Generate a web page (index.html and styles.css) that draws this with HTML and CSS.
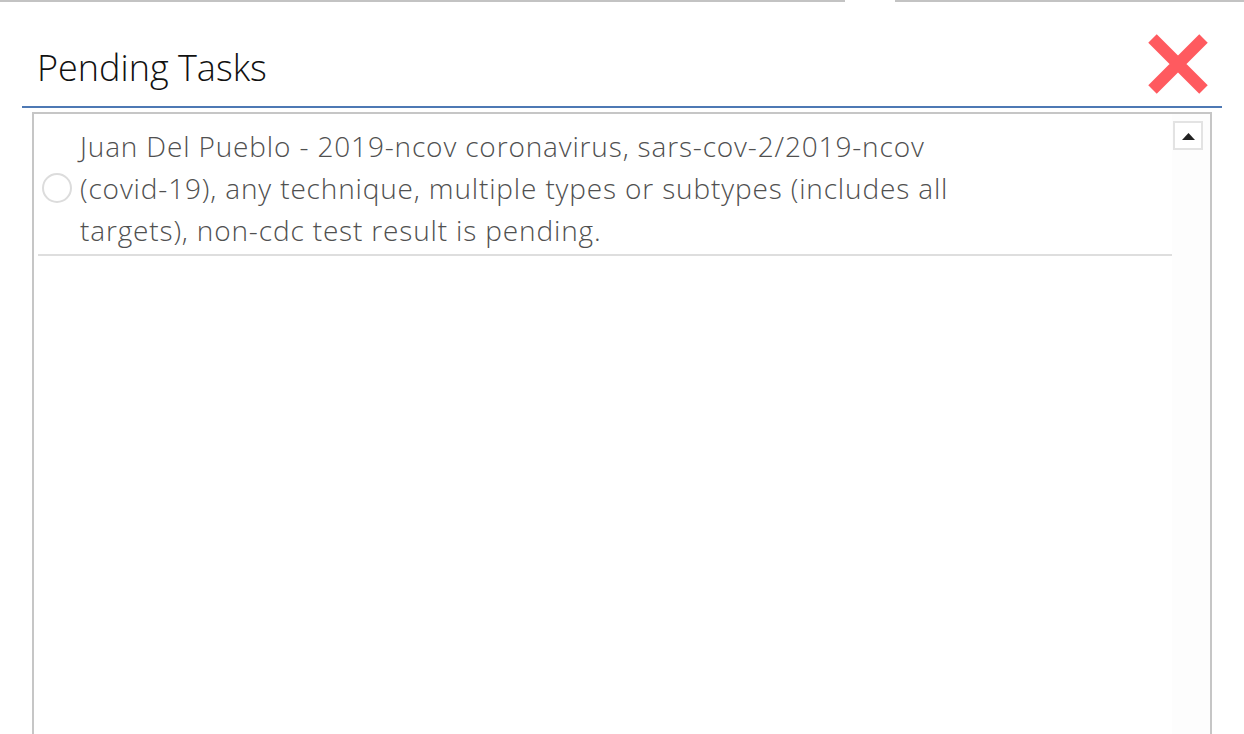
FILE: index.html
```html
<!DOCTYPE html>
<html>
<head>
<meta charset="utf-8">
<link rel="stylesheet" href="styles.css">
</head>
<body>
<div class="topbar">
  <div class="seg seg-left"></div>
  <div class="notch"></div>
  <div class="seg seg-right"></div>
</div>
<div class="header">
  <h1 class="title">Pending Tasks</h1>
  <button class="close" aria-label="Close">
    <svg width="60" height="60" viewBox="0 0 60 60">
      <path d="M4.5 4.5 L55.5 55.5 M55.5 4.5 L4.5 55.5" stroke="#ff5a5f" stroke-width="12" fill="none"/>
    </svg>
  </button>
</div>
<div class="listbox">
  <div class="list">
    <div class="item">
      <span class="radio"></span>
      <p class="item-text">Juan Del Pueblo - 2019-ncov coronavirus, sars-cov-2/2019-ncov (covid-19), any technique, multiple types or subtypes (includes all targets), non-cdc test result is pending.</p>
    </div>
  </div>
  <div class="scrollbar">
    <div class="scroll-up">
      <svg width="13" height="8" viewBox="0 0 13 8"><path d="M0 8 L6.5 1 L13 8 Z" fill="#222"/></svg>
    </div>
  </div>
</div>
</body>
</html>
```

FILE: styles.css
```css
html, body {
  margin: 0;
  padding: 0;
  background: #ffffff;
}
body {
  font-family: "Open Sans", "Liberation Sans", sans-serif;
  width: 1244px;
  height: 734px;
  overflow: hidden;
}
.topbar {
  display: flex;
  height: 2px;
}
.seg {
  background: #c3c3c3;
  height: 2px;
}
.seg-left {
  width: 845px;
}
.notch {
  width: 50px;
}
.seg-right {
  flex: 1;
}
.header {
  display: flex;
  justify-content: space-between;
  align-items: flex-start;
  margin: 0 22px;
  height: 104px;
  border-bottom: 2px solid #4e79b4;
}
.title {
  margin: 42px 0 0 15px;
  font-size: 36px;
  line-height: 48px;
  font-weight: 300;
  color: #111111;
}
.close {
  margin: 32px 14px 0 0;
  padding: 0;
  border: 0;
  background: transparent;
  width: 60px;
  height: 60px;
}
.close svg {
  display: block;
}
.listbox {
  display: flex;
  margin: 4px 0 0 32px;
  width: 1176px;
  height: 700px;
  border: 2px solid #c6c6c6;
  border-bottom: 0;
}
.list {
  flex: 1;
  padding: 0 0 0 4px;
}
.item {
  display: flex;
  align-items: center;
  padding: 11px 0 3px 0;
  border-bottom: 2px solid #dedede;
}
.radio {
  width: 26px;
  height: 26px;
  border: 2px solid #dcdcdc;
  border-radius: 50%;
  margin: 0 8px 0 4px;
  flex: none;
}
.item-text {
  margin: 0;
  width: 890px;
  font-size: 28px;
  letter-spacing: 0.85px;
  line-height: 42px;
  font-weight: 300;
  color: #505050;
}
.scrollbar {
  width: 38px;
  background: #fdfdfd;
}
.scroll-up {
  margin: 7px 0 0 1px;
  width: 26px;
  height: 25px;
  border: 2px solid #e3e3e3;
  background: #ffffff;
  display: flex;
  align-items: center;
  justify-content: center;
}
.scroll-up svg {
  display: block;
}
```
